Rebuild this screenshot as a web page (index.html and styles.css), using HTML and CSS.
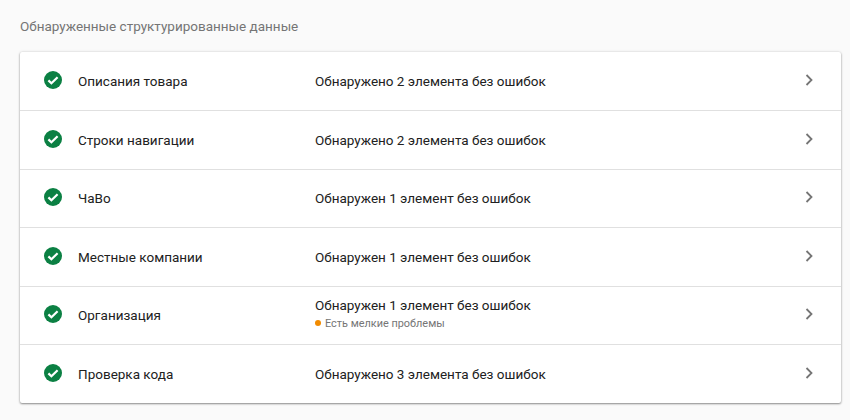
FILE: index.html
```html
<!DOCTYPE html>
<html lang="ru">
<head>
<meta charset="utf-8">
<title>Обнаруженные структурированные данные</title>
<link rel="stylesheet" href="styles.css">
</head>
<body>
<h2 class="heading">Обнаруженные структурированные данные</h2>
<div class="card">
  <div class="row">
    <svg class="check" viewBox="0 0 18 18"><circle cx="9" cy="9" r="9" fill="#0b8043"/><path d="M4.4 9.4 7.4 12.3 13.6 6.2" fill="none" stroke="#fff" stroke-width="2.2"/></svg>
    <div class="name">Описания товара</div>
    <div class="status"><div>Обнаружено 2 элемента без ошибок</div></div>
    <svg class="chev" viewBox="0 0 10 14"><path d="M2.5 2 7.5 7 2.5 12" fill="none" stroke="#757575" stroke-width="1.8"/></svg>
  </div>
  <div class="row">
    <svg class="check" viewBox="0 0 18 18"><circle cx="9" cy="9" r="9" fill="#0b8043"/><path d="M4.4 9.4 7.4 12.3 13.6 6.2" fill="none" stroke="#fff" stroke-width="2.2"/></svg>
    <div class="name">Строки навигации</div>
    <div class="status"><div>Обнаружено 2 элемента без ошибок</div></div>
    <svg class="chev" viewBox="0 0 10 14"><path d="M2.5 2 7.5 7 2.5 12" fill="none" stroke="#757575" stroke-width="1.8"/></svg>
  </div>
  <div class="row">
    <svg class="check" viewBox="0 0 18 18"><circle cx="9" cy="9" r="9" fill="#0b8043"/><path d="M4.4 9.4 7.4 12.3 13.6 6.2" fill="none" stroke="#fff" stroke-width="2.2"/></svg>
    <div class="name">ЧаВо</div>
    <div class="status"><div>Обнаружен 1 элемент без ошибок</div></div>
    <svg class="chev" viewBox="0 0 10 14"><path d="M2.5 2 7.5 7 2.5 12" fill="none" stroke="#757575" stroke-width="1.8"/></svg>
  </div>
  <div class="row">
    <svg class="check" viewBox="0 0 18 18"><circle cx="9" cy="9" r="9" fill="#0b8043"/><path d="M4.4 9.4 7.4 12.3 13.6 6.2" fill="none" stroke="#fff" stroke-width="2.2"/></svg>
    <div class="name">Местные компании</div>
    <div class="status"><div>Обнаружен 1 элемент без ошибок</div></div>
    <svg class="chev" viewBox="0 0 10 14"><path d="M2.5 2 7.5 7 2.5 12" fill="none" stroke="#757575" stroke-width="1.8"/></svg>
  </div>
  <div class="row">
    <svg class="check" viewBox="0 0 18 18"><circle cx="9" cy="9" r="9" fill="#0b8043"/><path d="M4.4 9.4 7.4 12.3 13.6 6.2" fill="none" stroke="#fff" stroke-width="2.2"/></svg>
    <div class="name">Организация</div>
    <div class="status">
      <div>Обнаружен 1 элемент без ошибок</div>
      <div class="note"><span class="dot"></span>Есть мелкие проблемы</div>
    </div>
    <svg class="chev" viewBox="0 0 10 14"><path d="M2.5 2 7.5 7 2.5 12" fill="none" stroke="#757575" stroke-width="1.8"/></svg>
  </div>
  <div class="row">
    <svg class="check" viewBox="0 0 18 18"><circle cx="9" cy="9" r="9" fill="#0b8043"/><path d="M4.4 9.4 7.4 12.3 13.6 6.2" fill="none" stroke="#fff" stroke-width="2.2"/></svg>
    <div class="name">Проверка кода</div>
    <div class="status"><div>Обнаружено 3 элемента без ошибок</div></div>
    <svg class="chev" viewBox="0 0 10 14"><path d="M2.5 2 7.5 7 2.5 12" fill="none" stroke="#757575" stroke-width="1.8"/></svg>
  </div>
</div>
</body>
</html>
```
FILE: styles.css
```css
html, body {
  margin: 0;
  height: 100%;
  overflow: hidden;
}
body {
  background: #fafafa;
  font-family: Roboto, "Liberation Sans", sans-serif;
  padding: 0 9px 0 20px;
  height: 420px;
  box-sizing: border-box;
}
.heading {
  margin: 0;
  padding-top: 18px;
  height: 52px;
  box-sizing: border-box;
  font-size: 13.5px;
  line-height: 17px;
  font-weight: 400;
  color: #757575;
}
.card {
  background: #fff;
  border-radius: 2px;
  box-shadow: 0 1px 2px rgba(0, 0, 0, 0.4), 0 0 3px rgba(0, 0, 0, 0.15);
  padding-top: 0.5px;
}
.row {
  display: flex;
  align-items: center;
  height: 58.5px;
  box-sizing: border-box;
  padding-left: 24px;
  border-bottom: 1px solid #e0e0e0;
  font-size: 13.5px;
  color: #212121;
}
.row:last-child {
  border-bottom: 0;
  height: 58px;
}
.check {
  width: 18px;
  height: 18px;
  flex: none;
  margin-right: 16px;
  position: relative;
  top: -1px;
}
.name {
  width: 237px;
  flex: none;
  line-height: 20px;
}
.status {
  flex: 1;
  line-height: 20px;
}
.note {
  display: flex;
  align-items: center;
  font-size: 10.9px;
  line-height: 13px;
  color: #757575;
  margin-top: 2px;
  margin-bottom: 6px;
}
.dot {
  width: 6px;
  height: 6px;
  border-radius: 50%;
  background: #f28b00;
  margin-right: 4px;
}
.chev {
  width: 10px;
  height: 14px;
  flex: none;
  margin-right: 27px;
  position: relative;
  top: -1px;
}
```
